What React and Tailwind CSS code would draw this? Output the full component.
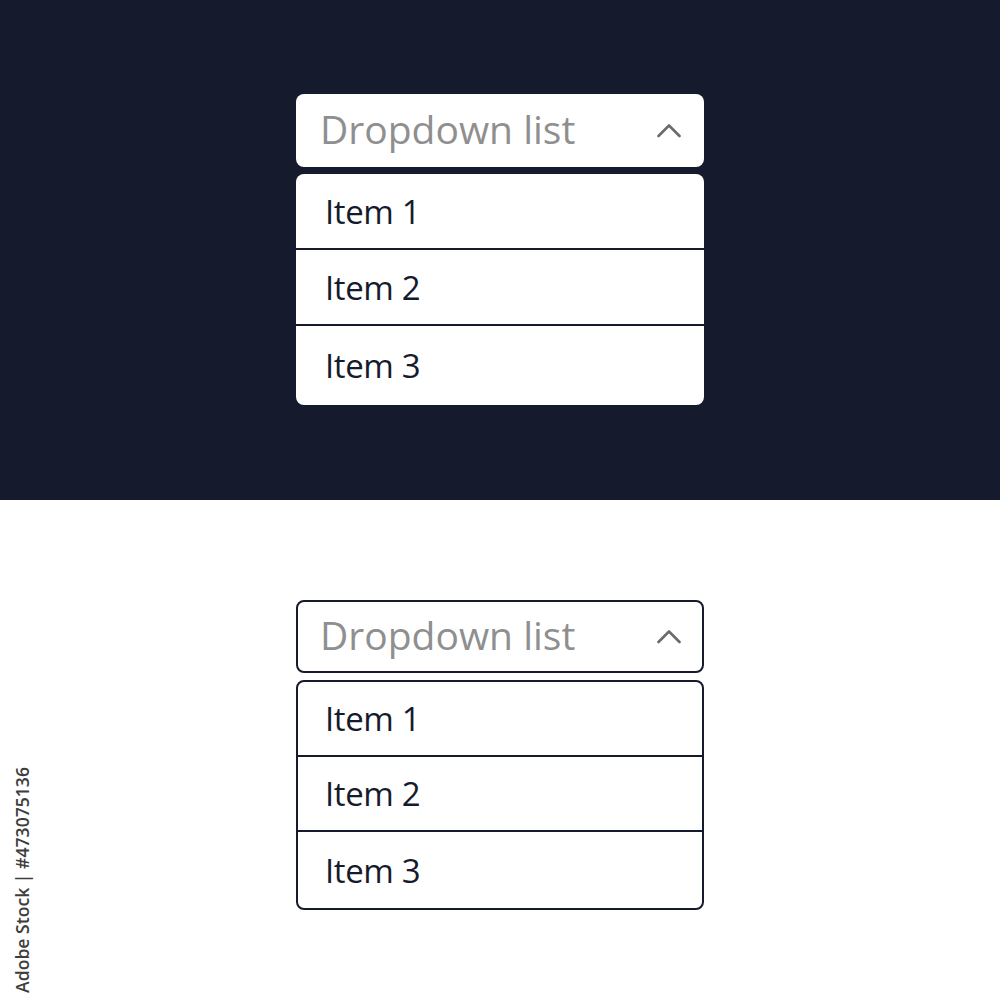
import React from "react";

const items = ["Item 1", "Item 2", "Item 3"];

const Chevron = () => (
  <svg width="24" height="15" viewBox="0 0 24 15" className="text-[#6b6b6b]">
    <polyline
      points="1.5,13 12,2.5 22.5,13"
      fill="none"
      stroke="currentColor"
      strokeWidth="2.6"
      strokeLinecap="round"
      strokeLinejoin="round"
    />
  </svg>
);

const Dropdown = ({ outlined }) => {
  const border = outlined ? "border-2 border-[#151b2c]" : "";
  const rowH = outlined ? ["h-[75px]", "h-[75px]", "h-[76px]"] : ["h-[76px]", "h-[76px]", "h-[79px]"];
  const headPad = outlined ? "pl-[22px] pr-[21px]" : "pl-[24px] pr-[23px]";
  const rowPad = outlined ? "pl-[27px]" : "pl-[29px]";
  return (
    <div className="w-[408px] flex flex-col gap-[7px]">
      {/* header */}
      <div
        className={`h-[73px] bg-white rounded-lg flex items-center justify-between ${headPad} ${border}`}
      >
        <span className="text-[39px] leading-none text-[#8f8f8f] pb-[5px]">
          Dropdown list
        </span>
        <Chevron />
      </div>

      {/* list */}
      <div className={`bg-white rounded-lg overflow-hidden ${border}`}>
        {items.map((it, i) => (
          <div
            key={it}
            className={`flex items-center ${rowPad} text-[33px] leading-none text-[#151b2c] tracking-[-0.4px] ${rowH[i]} ${
              i < items.length - 1 ? "border-b-2 border-[#151b2c]" : ""
            }`}
          >
            <span>{it}</span>
          </div>
        ))}
      </div>
    </div>
  );
};

export default function App() {
  return (
    <div
      className="relative w-[1000px] h-[1000px] overflow-hidden bg-white"
      style={{ fontFamily: '"Open Sans", "Noto Sans", sans-serif' }}
    >
      <div className="h-[500px] bg-[#151b2c] flex flex-col items-center pt-[94px]">
        <Dropdown />
      </div>
      <div className="h-[500px] bg-white flex flex-col items-center pt-[100px]">
        <Dropdown outlined />
      </div>

      {/* stock id on the left edge */}
      <div className="absolute left-[14px] bottom-[7px] [writing-mode:vertical-rl] rotate-180 text-[17.6px] font-semibold text-[#3d3d3d] leading-none">
        Adobe Stock | #473075136
      </div>
    </div>
  );
}
